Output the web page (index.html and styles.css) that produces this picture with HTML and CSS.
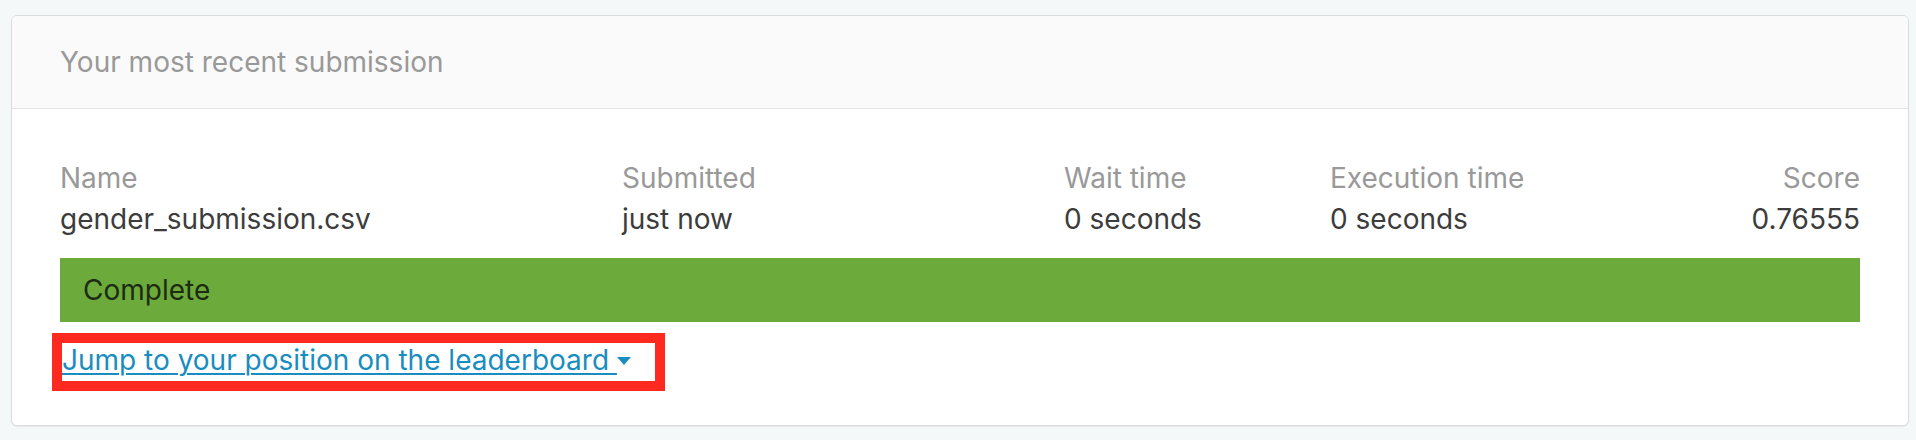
FILE: index.html
```html
<!DOCTYPE html>
<html lang="en">
<head>
<meta charset="utf-8">
<title>Your most recent submission</title>
<link rel="stylesheet" href="styles.css">
</head>
<body>
<section class="card">
  <header class="card-header">Your most recent submission</header>
  <div class="card-body">
    <div class="sub-table">
      <div class="cell">
        <span class="label">Name</span>
        <span class="value">gender_submission.csv</span>
      </div>
      <div class="cell">
        <span class="label">Submitted</span>
        <span class="value">just now</span>
      </div>
      <div class="cell">
        <span class="label">Wait time</span>
        <span class="value">0 seconds</span>
      </div>
      <div class="cell">
        <span class="label">Execution time</span>
        <span class="value">0 seconds</span>
      </div>
      <div class="cell cell-right">
        <span class="label">Score</span>
        <span class="value">0.76555</span>
      </div>
    </div>
    <div class="status">Complete</div>
    <div class="highlight">
      <a class="jump-link" href="#">Jump to your position on the leaderboard <svg class="caret" width="14" height="8" viewBox="0 0 14 8" aria-hidden="true"><path d="M0 0 H14 L7 8 Z" fill="currentColor"/></svg></a>
    </div>
  </div>
</section>
</body>
</html>
```
FILE: styles.css
```css
html, body {
  margin: 0;
  padding: 0;
}

body {
  background: #f5f8f9;
  font-family: Inter, "Noto Sans", sans-serif;
  font-size: 28px;
  line-height: 34px;
  color: #3c3c3c;
  padding: 15px 7px 14px 11px;
}

.card {
  background: #ffffff;
  border: 1px solid #d9dcde;
  border-radius: 6px;
  box-shadow: 0 1px 1px rgba(0, 0, 0, 0.06);
  overflow: hidden;
}

.card-header {
  height: 92px;
  display: flex;
  align-items: center;
  padding: 0 48px;
  background: #fafafa;
  border-bottom: 1px solid #e6e6e6;
  color: #999999;
}

.card-body {
  padding: 52px 48px 34px 48px;
  display: flex;
  flex-direction: column;
  align-items: flex-start;
}

.sub-table {
  align-self: stretch;
  display: grid;
  grid-template-columns: 562px 442px 266px 1fr auto;
}

.cell {
  display: flex;
  flex-direction: column;
  gap: 7px;
}

.cell-right {
  align-items: flex-end;
}

.label {
  color: #999999;
}

.value {
  color: #3c3c3c;
}

.status {
  align-self: stretch;
  margin-top: 22px;
  height: 64px;
  display: flex;
  align-items: center;
  padding: 0 23px;
  background: #6caa3c;
  color: #1d2b12;
}

.highlight {
  margin-top: 11px;
  margin-left: -8px;
  border: 10px solid #ff2a1f;
  padding: 0 24px 4px 0;
  background: #ffffff;
}

.jump-link {
  color: #1a8dc0;
  text-decoration: underline;
  text-decoration-thickness: 2px;
  text-underline-offset: 3px;
  display: inline-flex;
  align-items: center;
  white-space: pre;
}

.caret {
  margin-left: 0;
  margin-top: 2px;
}
```
